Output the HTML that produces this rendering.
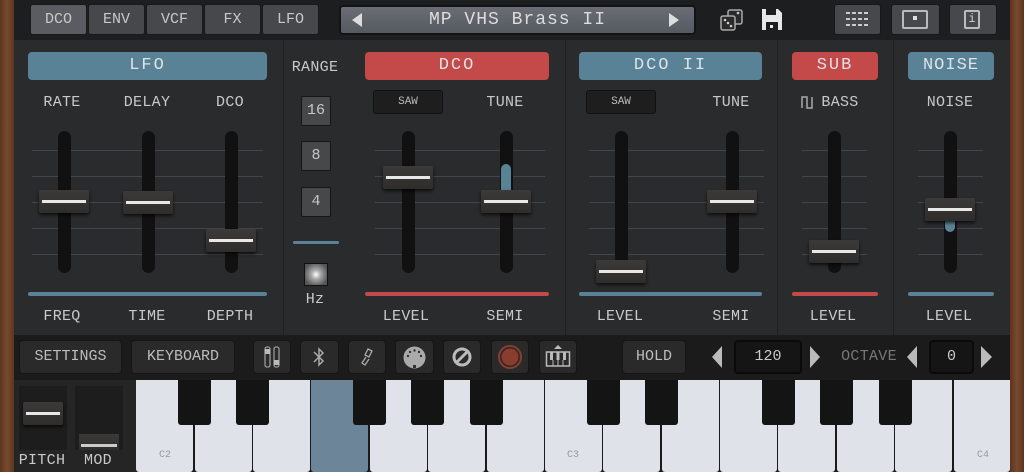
<!DOCTYPE html>
<html><head><meta charset="utf-8"><style>
*{margin:0;padding:0;box-sizing:border-box}
body{width:1024px;height:472px;overflow:hidden;background:#2a2b2d;position:relative;font-family:"Liberation Mono",monospace;color:#c9c9c9}
.a{position:absolute}
.t{position:absolute;font-size:15px;text-align:center;transform:translateX(-50%);white-space:nowrap;letter-spacing:0.3px}
.tab{position:absolute;top:4px;height:31px;width:57px;background:#47484c;border:1px solid #18191a;border-radius:3px;font-size:15px;text-align:center;line-height:29px;color:#c8c8c8}
.btn{position:absolute;background:#47484c;border:1px solid #17181a;border-radius:3px}
.hdr{position:absolute;top:52px;height:28px;border-radius:4px;color:#dde3e6;font-size:17px;text-align:center;line-height:28px;letter-spacing:2px}
.blue{background:#5a8296}.red{background:#c44a4a}
.trk{position:absolute;top:131px;width:13px;height:142px;background:#111;border-radius:7px;margin-left:-6px}
.hl{position:absolute;height:1px;background:#444548}
.hd{position:absolute;width:50px;height:23px;margin-left:-25px;margin-top:-12px;background:linear-gradient(#3b3a38,#2e2d2b);border-radius:2px;box-shadow:0 2px 3px rgba(0,0,0,.7)}
.hd:after{content:"";position:absolute;left:3px;right:3px;top:10px;height:3px;background:#e8e8e8}
.bar{position:absolute;top:292px;height:4px;border-radius:2px}
.vl{position:absolute;top:40px;width:1px;height:295px;background:#1f2021}
.rb{position:absolute;left:301px;width:30px;height:30px;background:#47484a;border:1px solid #161617;border-radius:2px;font-size:15px;text-align:center;line-height:28px;color:#c8c8c8}
.tb{position:absolute;top:340px;height:34px;background:#2a2a2b;border:1px solid #161616;border-radius:4px;font-size:15px;text-align:center;line-height:32px;color:#bdbdbd}
.wk{position:absolute;top:380px;height:92px;width:57px;background:#dfe2e8;border-radius:0 0 3px 3px}
.bk{position:absolute;top:380px;height:45px;width:33px;background:#141414;border-radius:0 0 3px 3px}
.kl{position:absolute;top:450px;font-size:10px;color:#999}
</style></head><body>
<div class="a" style="left:0;top:0;width:14px;height:472px;background:linear-gradient(90deg,#5a3420,#7a4a2e,#5a3620)"></div>
<div class="a" style="left:1010px;top:0;width:14px;height:472px;background:linear-gradient(90deg,#5a3420,#7a4a2e,#5a3620)"></div>
<div class="a" style="left:14px;top:0;width:996px;height:40px;background:#1d1e20"></div>

<div class="tab" style="left:30px;background:#5b5c61">DCO</div>
<div class="tab" style="left:88px">ENV</div>
<div class="tab" style="left:146px">VCF</div>
<div class="tab" style="left:204px">FX</div>
<div class="tab" style="left:262px">LFO</div>

<div class="a" style="left:339px;top:5px;width:357px;height:30px;background:linear-gradient(#6a6e74,#555960);border:2px solid #121314;border-radius:4px;font-size:18px;line-height:26px;text-align:center;color:#dcdcdc;letter-spacing:1px">MP VHS Brass II</div>
<div class="a" style="left:352px;top:13px;width:0;height:0;border-top:7px solid transparent;border-bottom:7px solid transparent;border-right:10px solid #ddd"></div>
<div class="a" style="left:669px;top:13px;width:0;height:0;border-top:7px solid transparent;border-bottom:7px solid transparent;border-left:10px solid #ddd"></div>
<svg class="a" style="left:719px;top:8px" width="26" height="24"><rect x="9" y="2" width="14" height="14" rx="2" fill="#2a2a2a" stroke="#aaa" stroke-width="1.5"/><rect x="2" y="8" width="14" height="14" rx="2" fill="#2a2a2a" stroke="#aaa" stroke-width="1.5"/><circle cx="6" cy="12" r="1.3" fill="#ccc"/><circle cx="9" cy="15" r="1.3" fill="#ccc"/><circle cx="12" cy="18" r="1.3" fill="#ccc"/><circle cx="19" cy="5" r="1.3" fill="#ccc"/></svg>
<svg class="a" style="left:761px;top:8px" width="22" height="23"><path d="M1 1h16l4 4v17H1z" fill="#e8e8e8"/><rect x="5" y="1" width="10" height="6" fill="#1d1e20"/><rect x="5" y="14" width="12" height="8" fill="#1d1e20"/><rect x="9" y="17" width="3" height="3" fill="#e8e8e8"/></svg>
<div class="btn" style="left:834px;top:4px;width:47px;height:31px"></div>
<svg class="a" style="left:846px;top:12px" width="24" height="15" fill="#ccc"><rect x="0" y="0" width="4" height="2"/><rect x="6" y="0" width="4" height="2"/><rect x="12" y="0" width="4" height="2"/><rect x="18" y="0" width="4" height="2"/><rect x="0" y="6" width="4" height="2"/><rect x="6" y="6" width="4" height="2"/><rect x="12" y="6" width="4" height="2"/><rect x="18" y="6" width="4" height="2"/><rect x="0" y="12" width="4" height="2"/><rect x="6" y="12" width="4" height="2"/><rect x="12" y="12" width="4" height="2"/><rect x="18" y="12" width="4" height="2"/></svg>
<div class="btn" style="left:891px;top:4px;width:49px;height:31px"></div>
<div class="a" style="left:902px;top:10px;width:26px;height:19px;border:2px solid #bbb;border-radius:2px"></div>
<div class="a" style="left:913px;top:16px;width:4px;height:4px;background:#ddd"></div>
<div class="btn" style="left:949px;top:4px;width:48px;height:31px"></div>
<div class="a" style="left:964px;top:10px;width:16px;height:19px;border:2px solid #bbb;border-radius:2px;font-size:12px;line-height:15px;text-align:center;color:#ccc">i</div>

<div class="vl" style="left:283px"></div><div class="vl" style="left:565px"></div><div class="vl" style="left:777px"></div><div class="vl" style="left:893px"></div>

<div class="hdr blue" style="left:28px;width:239px">LFO</div>
<div class="hdr red" style="left:365px;width:184px">DCO</div>
<div class="hdr blue" style="left:579px;width:183px">DCO II</div>
<div class="hdr red" style="left:792px;width:86px">SUB</div>
<div class="hdr blue" style="left:908px;width:86px;letter-spacing:1px">NOISE</div>

<div class="t" style="left:62px;top:94px">RATE</div>
<div class="t" style="left:147px;top:94px">DELAY</div>
<div class="t" style="left:230px;top:94px">DCO</div>
<div class="t" style="left:315px;top:59px">RANGE</div>
<div class="a" style="left:373px;top:90px;width:70px;height:24px;background:#1e1e1f;border:1px solid #111;border-radius:3px;font-size:11px;text-align:center;line-height:22px;color:#bbb">SAW</div>
<div class="t" style="left:505px;top:94px">TUNE</div>
<div class="a" style="left:586px;top:90px;width:70px;height:24px;background:#1e1e1f;border:1px solid #111;border-radius:3px;font-size:11px;text-align:center;line-height:22px;color:#bbb">SAW</div>
<div class="t" style="left:731px;top:94px">TUNE</div>
<div class="t" style="left:840px;top:94px">BASS</div>
<svg class="a" style="left:801px;top:96px" width="12" height="13"><path d="M1 12V1h5v11h5V1" stroke="#aaa" stroke-width="1.5" fill="none"/></svg>
<div class="t" style="left:950px;top:94px">NOISE</div>

<div class="hl" style="left:32px;top:150px;width:231px"></div><div class="hl" style="left:32px;top:176px;width:231px"></div><div class="hl" style="left:32px;top:202px;width:231px"></div><div class="hl" style="left:32px;top:228px;width:231px"></div><div class="hl" style="left:32px;top:254px;width:231px"></div>
<div class="hl" style="left:375px;top:150px;width:170px"></div><div class="hl" style="left:375px;top:176px;width:170px"></div><div class="hl" style="left:375px;top:202px;width:170px"></div><div class="hl" style="left:375px;top:228px;width:170px"></div><div class="hl" style="left:375px;top:254px;width:170px"></div>
<div class="hl" style="left:589px;top:150px;width:175px"></div><div class="hl" style="left:589px;top:176px;width:175px"></div><div class="hl" style="left:589px;top:202px;width:175px"></div><div class="hl" style="left:589px;top:228px;width:175px"></div><div class="hl" style="left:589px;top:254px;width:175px"></div>
<div class="hl" style="left:802px;top:150px;width:65px"></div><div class="hl" style="left:802px;top:176px;width:65px"></div><div class="hl" style="left:802px;top:202px;width:65px"></div><div class="hl" style="left:802px;top:228px;width:65px"></div><div class="hl" style="left:802px;top:254px;width:65px"></div>
<div class="hl" style="left:918px;top:150px;width:65px"></div><div class="hl" style="left:918px;top:176px;width:65px"></div><div class="hl" style="left:918px;top:202px;width:65px"></div><div class="hl" style="left:918px;top:228px;width:65px"></div><div class="hl" style="left:918px;top:254px;width:65px"></div>

<div class="trk" style="left:64px"></div><div class="trk" style="left:148px"></div><div class="trk" style="left:231px"></div>
<div class="trk" style="left:408px"></div><div class="trk" style="left:506px"></div>
<div class="trk" style="left:621px"></div><div class="trk" style="left:732px"></div>
<div class="trk" style="left:834px"></div><div class="trk" style="left:950px"></div>
<div class="a" style="left:501px;top:164px;width:10px;height:38px;background:#5a8296;border-radius:5px"></div>
<div class="a" style="left:945px;top:210px;width:10px;height:22px;background:#5a8296;border-radius:5px"></div>

<div class="hd" style="left:64px;top:202px"></div><div class="hd" style="left:148px;top:203px"></div><div class="hd" style="left:231px;top:241px"></div>
<div class="hd" style="left:408px;top:178px"></div><div class="hd" style="left:506px;top:202px"></div>
<div class="hd" style="left:621px;top:272px"></div><div class="hd" style="left:732px;top:202px"></div>
<div class="hd" style="left:834px;top:252px"></div><div class="hd" style="left:950px;top:210px"></div>

<div class="rb" style="top:96px">16</div>
<div class="rb" style="top:141px">8</div>
<div class="rb" style="top:187px">4</div>
<div class="a" style="left:293px;top:241px;width:46px;height:3px;background:#5a8296;border-radius:2px"></div>
<div class="a" style="left:304px;top:263px;width:24px;height:23px;background:radial-gradient(circle,#fff 0,#aaa 30%,#555 80%);border:1px solid #111"></div>
<div class="t" style="left:315px;top:291px">Hz</div>

<div class="bar blue" style="left:28px;width:239px"></div>
<div class="bar red" style="left:365px;width:184px"></div>
<div class="bar blue" style="left:579px;width:183px"></div>
<div class="bar red" style="left:792px;width:86px"></div>
<div class="bar blue" style="left:908px;width:86px"></div>

<div class="t" style="left:62px;top:308px">FREQ</div>
<div class="t" style="left:147px;top:308px">TIME</div>
<div class="t" style="left:230px;top:308px">DEPTH</div>
<div class="t" style="left:406px;top:308px">LEVEL</div>
<div class="t" style="left:505px;top:308px">SEMI</div>
<div class="t" style="left:620px;top:308px">LEVEL</div>
<div class="t" style="left:731px;top:308px">SEMI</div>
<div class="t" style="left:833px;top:308px">LEVEL</div>
<div class="t" style="left:949px;top:308px">LEVEL</div>

<div class="a" style="left:14px;top:335px;width:996px;height:45px;background:#1b1b1c"></div>
<div class="tb" style="left:19px;width:103px">SETTINGS</div>
<div class="tb" style="left:131px;width:104px">KEYBOARD</div>
<div class="tb" style="left:253px;width:38px"></div>
<svg class="a" style="left:263px;top:346px" width="18" height="22"><rect x="2" y="1" width="5" height="20" rx="2" fill="none" stroke="#999" stroke-width="1.3"/><rect x="11" y="1" width="5" height="20" rx="2" fill="none" stroke="#999" stroke-width="1.3"/><rect x="2" y="3" width="5" height="5" fill="#bbb"/><rect x="11" y="14" width="5" height="5" fill="#bbb"/></svg>
<div class="tb" style="left:300px;width:39px"></div>
<svg class="a" style="left:312px;top:347px" width="14" height="20"><path d="M2 5l9 9-4 4V2l4 4-9 9" stroke="#aaa" stroke-width="1.5" fill="none"/></svg>
<div class="tb" style="left:348px;width:38px"></div>
<svg class="a" style="left:359px;top:347px" width="16" height="20"><path d="M9 2l4 2-3 6-4-2zM7 10l-4 6 3 2 4-6" stroke="#aaa" stroke-width="1.3" fill="none"/></svg>
<div class="tb" style="left:395px;width:39px"></div>
<svg class="a" style="left:402px;top:345px" width="25" height="25"><circle cx="12.5" cy="12.5" r="11" fill="#aaa"/><circle cx="6" cy="11" r="1.2" fill="#333"/><circle cx="8" cy="7" r="1.2" fill="#333"/><circle cx="12.5" cy="5.5" r="1.2" fill="#333"/><circle cx="17" cy="7" r="1.2" fill="#333"/><circle cx="19" cy="11" r="1.2" fill="#333"/><rect x="11" y="20" width="3" height="3" fill="#333"/></svg>
<div class="tb" style="left:443px;width:38px"></div>
<svg class="a" style="left:451px;top:346px" width="22" height="22"><circle cx="11" cy="11" r="8" fill="none" stroke="#bbb" stroke-width="3"/><path d="M6 16L16 6" stroke="#bbb" stroke-width="3"/></svg>
<div class="tb" style="left:491px;width:38px"></div>
<svg class="a" style="left:497px;top:344px" width="26" height="26"><circle cx="13" cy="13" r="11" fill="none" stroke="#8a3d2c" stroke-width="2"/><circle cx="13" cy="13" r="8.5" fill="#8a3d2c"/></svg>
<div class="tb" style="left:539px;width:38px"></div>
<svg class="a" style="left:545px;top:343px" width="26" height="26"><path d="M9 6l4-4 4 4z" fill="#bbb"/><rect x="1.5" y="9" width="23" height="14" fill="none" stroke="#bbb" stroke-width="1.5"/><rect x="5" y="9" width="3" height="8" fill="#bbb"/><rect x="11.5" y="9" width="3" height="8" fill="#bbb"/><rect x="18" y="9" width="3" height="8" fill="#bbb"/><path d="M8 17v6M13 17v6M18 17v6" stroke="#bbb"/></svg>
<div class="tb" style="left:622px;width:64px">HOLD</div>
<div class="a" style="left:712px;top:346px;width:10px;height:22px;background:#bbb;clip-path:polygon(0 50%,100% 0,100% 100%)"></div>
<div class="a" style="left:734px;top:340px;width:68px;height:34px;background:#151515;border:2px solid #0a0a0a;border-radius:4px;font-size:15px;text-align:center;line-height:30px">120</div>
<div class="a" style="left:810px;top:346px;width:10px;height:22px;background:#bbb;clip-path:polygon(0 0,100% 50%,0 100%)"></div>
<div class="t" style="left:869px;top:348px;color:#777">OCTAVE</div>
<div class="a" style="left:907px;top:346px;width:10px;height:22px;background:#bbb;clip-path:polygon(0 50%,100% 0,100% 100%)"></div>
<div class="a" style="left:929px;top:340px;width:45px;height:34px;background:#151515;border:2px solid #0a0a0a;border-radius:4px;font-size:15px;text-align:center;line-height:30px">0</div>
<div class="a" style="left:981px;top:346px;width:11px;height:22px;background:#bbb;clip-path:polygon(0 0,100% 50%,0 100%)"></div>

<div class="a" style="left:14px;top:380px;width:122px;height:92px;background:#252526"></div>
<div class="a" style="left:19px;top:386px;width:48px;height:64px;background:#1d1d1e"></div>
<div class="a" style="left:75px;top:386px;width:48px;height:64px;background:#1d1d1e"></div>
<div class="hd" style="left:43px;top:414px;width:40px;margin-left:-20px"></div>
<div class="a" style="left:79px;top:434px;width:40px;height:16px;background:linear-gradient(#3b3a38,#2e2d2b)"><div style="position:absolute;left:2px;right:2px;top:10px;height:3px;background:#ccc"></div></div>
<div class="t" style="left:42px;top:452px">PITCH</div>
<div class="t" style="left:98px;top:452px">MOD</div>
<div class="a" style="left:136px;top:380px;width:874px;height:92px;background:#1a1a1a"></div>
<div class="wk" style="left:136px"></div><div class="wk" style="left:195px"></div><div class="wk" style="left:253px"></div><div class="wk" style="left:311px;background:#6c8598"></div><div class="wk" style="left:370px"></div><div class="wk" style="left:428px"></div><div class="wk" style="left:487px"></div><div class="wk" style="left:545px"></div><div class="wk" style="left:603px"></div><div class="wk" style="left:662px"></div><div class="wk" style="left:720px"></div><div class="wk" style="left:778px"></div><div class="wk" style="left:837px"></div><div class="wk" style="left:895px"></div><div class="wk" style="left:954px;width:56px"></div>
<div class="bk" style="left:178px"></div><div class="bk" style="left:236px"></div><div class="bk" style="left:353px"></div><div class="bk" style="left:411px"></div><div class="bk" style="left:470px"></div><div class="bk" style="left:587px"></div><div class="bk" style="left:645px"></div><div class="bk" style="left:762px"></div><div class="bk" style="left:820px"></div><div class="bk" style="left:879px"></div>
<div class="kl" style="left:159px">C2</div><div class="kl" style="left:567px">C3</div><div class="kl" style="left:977px">C4</div>
</body></html>
